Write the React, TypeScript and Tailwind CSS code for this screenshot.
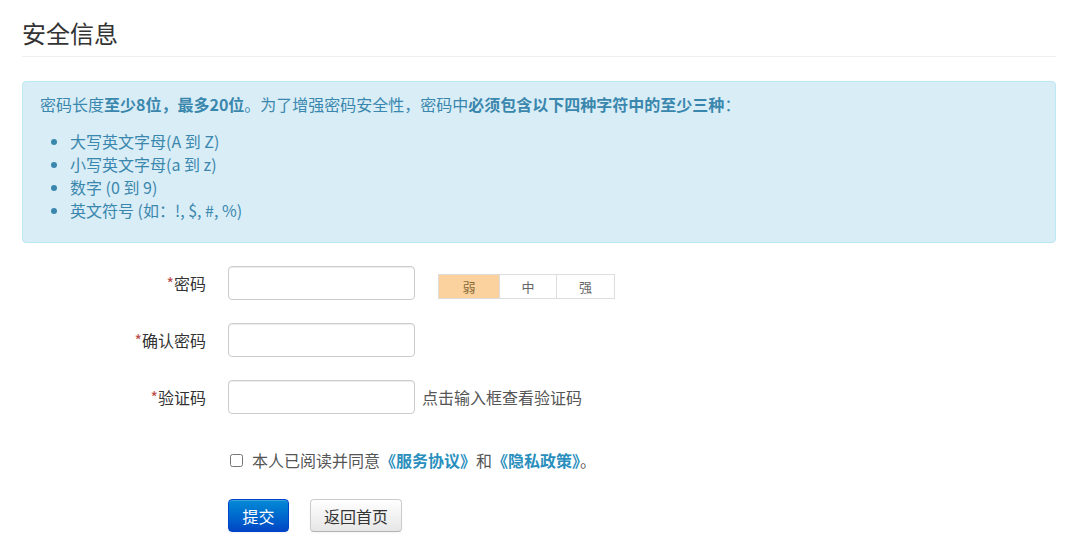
import React, { useState } from "react"

const font = { fontFamily: '"Noto Sans CJK SC", "Liberation Sans", sans-serif' }

const Field: React.FC<{ label: string; children?: React.ReactNode }> = ({ label, children }) => (
  <div className="flex items-center h-[34px]">
    <label className="w-[206px] text-right text-[16px] text-[#333]">
      <span className="text-[#b94a48]">*</span>
      {label}
    </label>
    <input
      type="text"
      className="ml-[22px] w-[187px] h-[34px] rounded-[4px] border border-[#ccc] bg-white shadow-[inset_0_1px_1px_rgba(0,0,0,0.075)] outline-none"
    />
    {children}
  </div>
)

const App: React.FC = () => {
  const [agree, setAgree] = useState(false)

  return (
    <div className="w-[1080px] h-[558px] bg-white overflow-hidden" style={font}>
      <div className="pl-[22px] pr-[24px] pt-[16px]">
        <h1 className="text-[24px] leading-[34px] text-[#333] pb-[6px] border-b border-[#eee]">安全信息</h1>

        <div className="mt-[24px] h-[162px] rounded-[4px] border border-[#bce8f1] bg-[#d9edf7] text-[#3a87ad] pl-[17px] pt-[11px] text-[16px] leading-[23px]">
          <p>
            密码长度<b>至少8位，最多20位</b>。为了增强密码安全性，密码中<b>必须包含以下四种字符中的至少三种</b>：
          </p>
          <ul className="mt-[14px] ml-[30px] list-disc">
            <li>大写英文字母(A 到 Z)</li>
            <li>小写英文字母(a 到 z)</li>
            <li>数字 (0 到 9)</li>
            <li>英文符号 (如：!, $, #, %)</li>
          </ul>
        </div>
      </div>

      <div className="mt-[23px] flex flex-col gap-[23px]">
        <Field label="密码">
          <div className="self-start ml-[23px] mt-[8px] flex h-[25px] border border-[#ddd] text-[13px] text-[#666]">
            <div className="w-[60px] flex items-center justify-center bg-[#fbd29d] text-[#8a6d3b]">弱</div>
            <div className="w-[57px] flex items-center justify-center border-l border-[#ddd] bg-white">中</div>
            <div className="w-[58px] flex items-center justify-center border-l border-[#ddd] bg-white">强</div>
          </div>
        </Field>
        <Field label="确认密码" />
        <Field label="验证码">
          <span className="ml-[7px] text-[16px] text-[#555]">点击输入框查看验证码</span>
        </Field>
      </div>

      <div className="mt-[36px] ml-[230px] flex items-center h-[20px]">
        <input
          type="checkbox"
          checked={agree}
          onChange={() => setAgree(!agree)}
          className="w-[13px] h-[13px] m-0"
        />
        <span className="ml-[9px] text-[16px] text-[#555]">
          本人已阅读并同意<a className="font-bold text-[#2a8fbd]">《服务协议》</a>和<a className="font-bold text-[#2a8fbd]">《隐私政策》</a>。
        </span>
      </div>

      <div className="mt-[29px] ml-[228px] flex gap-[21px]">
        <button className="w-[61px] h-[33px] rounded-[4px] border border-[#0044cc] bg-gradient-to-b from-[#0a8ad6] to-[#0446c4] text-white text-[16px] shadow-[inset_0_1px_0_rgba(255,255,255,0.2),0_1px_2px_rgba(0,0,0,0.05)]">
          提交
        </button>
        <button className="w-[92px] h-[33px] rounded-[4px] border border-[#ccc] border-b-[#b3b3b3] bg-gradient-to-b from-white to-[#e6e6e6] text-[#333] text-[16px] shadow-[inset_0_1px_0_rgba(255,255,255,0.2),0_1px_2px_rgba(0,0,0,0.05)]">
          返回首页
        </button>
      </div>
    </div>
  )
}

export default App
